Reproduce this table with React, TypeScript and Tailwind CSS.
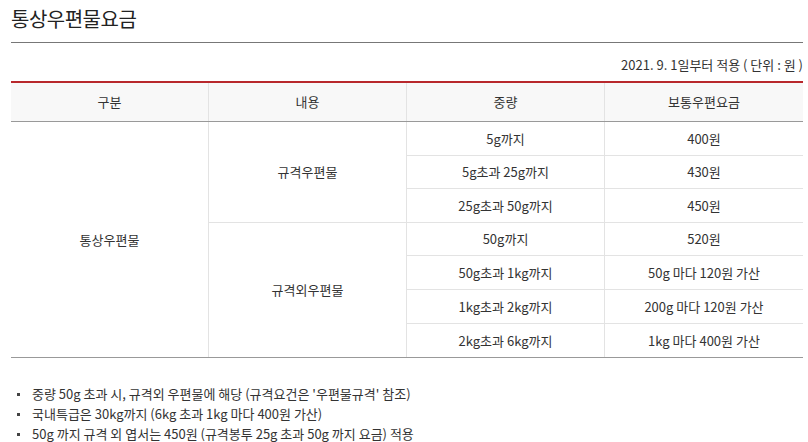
import React from "react";

const rows1 = [
  ["5g까지", "400원"],
  ["5g초과 25g까지", "430원"],
  ["25g초과 50g까지", "450원"],
];
const rows2 = [
  ["50g까지", "520원"],
  ["50g초과 1kg까지", "50g 마다 120원 가산"],
  ["1kg초과 2kg까지", "200g 마다 120원 가산"],
  ["2kg초과 6kg까지", "1kg 마다 400원 가산"],
];

export default function App() {
  const all = [...rows1, ...rows2];
  return (
    <div className="w-[808px] h-[442px] overflow-hidden bg-white text-[#333] font-['Noto_Sans_CJK_KR','Noto_Sans',sans-serif]">
      <div className="pl-[11px] pr-[5px]">
        <h2 className="pt-[5px] pb-[10px] text-[20px] leading-[27px] font-normal tracking-[-0.5px] text-[#222] border-b border-[#777]">
          통상우편물요금
        </h2>
        <div className="mt-[12px] h-[26px] text-right text-[13px] leading-[20px] text-[#333]">
          2021. 9. 1일부터 적용 ( 단위 : 원 )
        </div>
        <div className="border-t-2 border-[#b8282c]">
          <div className="grid grid-cols-4 h-[39px] bg-[#f8f8f8] border-b border-[#999] text-[13px]">
            {["구분", "내용", "중량", "보통우편요금"].map((h, i) => (
              <div
                key={h}
                className={`flex items-center justify-center ${i < 3 ? "border-r border-[#e3e3e3]" : ""}`}
              >
                {h}
              </div>
            ))}
          </div>
          <div className="grid grid-cols-4 grid-rows-[repeat(7,33.6px)] border-b border-[#999] text-[13px]">
            <div className="row-span-7 col-start-1 row-start-1 flex items-center justify-center border-r border-[#e3e3e3]">
              통상우편물
            </div>
            <div className="row-span-3 col-start-2 row-start-1 flex items-center justify-center border-r border-b border-[#e3e3e3]">
              규격우편물
            </div>
            <div className="row-span-4 col-start-2 row-start-4 flex items-center justify-center border-r border-[#e3e3e3]">
              규격외우편물
            </div>
            {all.map(([w, p], i) => (
              <React.Fragment key={i}>
                <div
                  className={`col-start-3 flex items-center justify-center border-r border-[#e3e3e3] ${i < 6 ? "border-b" : ""}`}
                  style={{ gridRowStart: i + 1 }}
                >
                  {w}
                </div>
                <div
                  className={`col-start-4 flex items-center justify-center border-[#e3e3e3] ${i < 6 ? "border-b" : ""}`}
                  style={{ gridRowStart: i + 1 }}
                >
                  {p}
                </div>
              </React.Fragment>
            ))}
          </div>
        </div>
        <ul className="mt-[26px] text-[13px] leading-[20px]">
          {[
            "중량 50g 초과 시, 규격외 우편물에 해당 (규격요건은 '우편물규격' 참조)",
            "국내특급은 30kg까지 (6kg 초과 1kg 마다 400원 가산)",
            "50g 까지 규격 외 엽서는 450원 (규격봉투 25g 초과 50g 까지 요금) 적용",
          ].map((t) => (
            <li key={t} className="flex items-center">
              <span className="ml-[6px] mr-[12px] w-[3px] h-[3px] bg-[#444]" />
              <span>{t}</span>
            </li>
          ))}
        </ul>
      </div>
    </div>
  );
}
